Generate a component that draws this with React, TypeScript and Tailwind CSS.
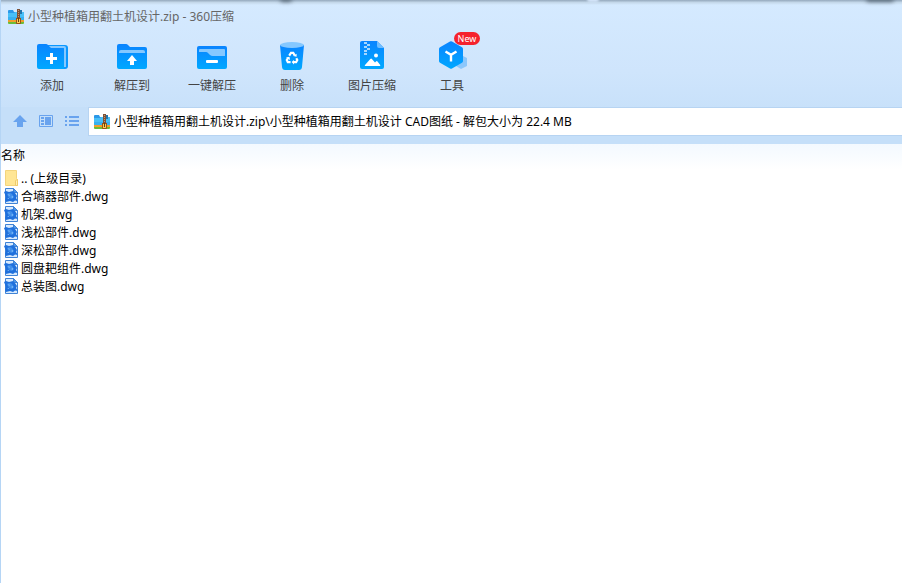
import type { ReactNode } from 'react';

const files = [
  '合墒器部件.dwg',
  '机架.dwg',
  '浅松部件.dwg',
  '深松部件.dwg',
  '圆盘耙组件.dwg',
  '总装图.dwg',
];

function Gradient({ id }: { id: string }) {
  return (
    <defs>
      <linearGradient id={id} x1="0" y1="0" x2="0" y2="1">
        <stop offset="0" stopColor="#0a84ff" />
        <stop offset="1" stopColor="#00a8ff" />
      </linearGradient>
    </defs>
  );
}

function AddIcon() {
  return (
    <svg width="32" height="32" viewBox="0 0 32 32" aria-hidden="true">
      <Gradient id="add" />
      <path d="M12 4h17a3 3 0 0 1 3 3v18a3 3 0 0 1-3 3H12z" fill="#0a98ff" />
      <path d="M13 5h15a2 2 0 0 1 2 2v19h-2V7H13z" fill="#85c8ff" />
      <path d="M1 5a2 2 0 0 1 2-2h7a3 3 0 0 1 2 1l3 3h11a2 2 0 0 1 2 2v19H3a2 2 0 0 1-2-2z" fill="url(#add)" />
      <path d="M14 12h3v4h4v3h-4v4h-3v-4h-4v-3h4z" fill="#fff" />
    </svg>
  );
}

function ExtractIcon() {
  return (
    <svg width="32" height="32" viewBox="0 0 32 32" aria-hidden="true">
      <Gradient id="extract" />
      <path d="M1 5a2 2 0 0 1 2-2h7a3 3 0 0 1 2 1l2 2h15a2 2 0 0 1 2 2v18a2 2 0 0 1-2 2H3a2 2 0 0 1-2-2z" fill="url(#extract)" />
      <path d="M3 12v-1a2 2 0 0 1 2-2h22a2 2 0 0 1 2 2v1z" fill="#85c8ff" />
      <path d="M16 14l5 6h-3v4h-4v-4h-3z" fill="#fff" />
    </svg>
  );
}

function QuickIcon() {
  return (
    <svg width="32" height="32" viewBox="0 0 32 32" aria-hidden="true">
      <Gradient id="quick" />
      <rect x="1" y="5" width="30" height="23" rx="2" fill="url(#quick)" />
      <path d="M3 11V9a1 1 0 0 1 1-1h24a1 1 0 0 1 1 1v6H17a4 4 0 0 1-3-1l-2-2a3 3 0 0 0-2-1z" fill="#85c8ff" />
      <rect x="10" y="19" width="12" height="3" rx="1" fill="#fff" />
    </svg>
  );
}

function DeleteIcon() {
  return (
    <svg width="32" height="32" viewBox="0 0 32 32" aria-hidden="true">
      <Gradient id="trash" />
      <path d="M4 4h24l-2 22q-.3 3-3 3H9q-2.700 0-3-3z" fill="url(#trash)" />
      <ellipse cx="16" cy="4" rx="12" ry="3" fill="#85c8ff" />
      <g fill="none" stroke="#fff" strokeWidth="2.200">
        <path d="M13.200 14.600l1.800-2.800h2.200l1.500 2.600" />
        <path d="M20.300 17.200l1 1.900-1.200 2.100h-2.300" />
        <path d="M14.600 21.200h-2.800L10.800 19l1.200-2" />
      </g>
      <path d="M20.600 12.800v3l-3.300-.7zM18 18.900v4.500l-2.400-2.300zM10 16.500l3.500-.8.500 3.200z" fill="#fff" />
    </svg>
  );
}

function ImageZipIcon() {
  return (
    <svg width="32" height="32" viewBox="0 0 32 32" aria-hidden="true">
      <Gradient id="image" />
      <path d="M4 2a2 2 0 0 1 2-2h15l7 7v19a2 2 0 0 1-2 2H6a2 2 0 0 1-2-2z" fill="url(#image)" />
      <path d="M21 0l7 7h-5a2 2 0 0 1-2-2z" fill="#70bdff" />
      <path d="M8 1h3v2H8zM11 3h3v2h-3zM8 5h3v2H8zM11 7h3v2h-3zM8 9h3v2H8zM8 12h3v2H8z" fill="#a5d7ff" />
      <circle cx="20" cy="14.500" r="2" fill="#fff" />
      <path d="M9 25q-.6-.2 0-1l5.300-6q.8-.8 1.600 0l3.100 3.500 1-1q.8-.8 1.500 0l2.700 3.500q.5.800-.4 1z" fill="#fff" />
    </svg>
  );
}

function ToolsIcon() {
  return (
    <svg width="32" height="32" viewBox="0 0 32 32" aria-hidden="true">
      <Gradient id="tools" />
      <path d="M25 14l6 3v8l-6 3-5-3z" fill="#8cc7fb" />
      <path d="M14 .5q1-.6 2 0l10 5.800q1 .6 1 1.700v12q0 1.100-1 1.700L16 27.500q-1 .6-2 0L4 21.700q-1-.6-1-1.700V8q0-1.100 1-1.700z" fill="url(#tools)" />
      <path d="M9.500 10.500l5.500 3.300 5.500-3.300M15 13.800v6.700" stroke="#fff" strokeWidth="2.400" fill="none" />
    </svg>
  );
}

function ZipIcon() {
  return (
    <svg width="16" height="16" viewBox="0 0 16 16" className="shrink-0" aria-hidden="true">
      <path d="M0 2q0-1 1-1h4l1 2h9q1 0 1 1v8H0z" fill="#2b98e8" />
      <path d="M0 4h6l1-1h8q1 0 1 1v7H0z" fill="#48c0f8" />
      <path d="M0 8h16v3H0z" fill="#38b0f0" />
      <path d="M0 11h16v2H0z" fill="#ef9f2c" />
      <path d="M0 13h16v1q0 1-1 1H1q-1 0-1-1z" fill="#6cbc38" />
      <path d="M9 0h3v9H9z" fill="#7d5238" />
      <path d="M12 1h2v4h-2z" fill="#2274ac" />
      <path d="M10 1h1v1h-1zM10 3h1v1h-1zM10 5h1v1h-1zM10 7h1v1h-1z" fill="#c89468" />
      <path d="M8 9h5v5q0 1-1 1H9q-1 0-1-1z" fill="#9a5216" />
      <path d="M9 10h3v4H9z" fill="#f8ce50" />
      <path d="M10 9h1v4h-1z" fill="#6b3b12" />
    </svg>
  );
}

function FolderIcon() {
  return (
    <svg width="16" height="18" viewBox="0 0 16 18" className="shrink-0" aria-hidden="true">
      <path d="M1.500.500h11v8l1 1v6h-12z" fill="#ffe694" stroke="#f3d47c" />
      <path d="M13.500 9.500v6h-2v-5z" fill="#fff0b5" stroke="#efcb6b" />
    </svg>
  );
}

function DwgIcon() {
  return (
    <svg width="16" height="18" viewBox="0 0 16 18" className="shrink-0" aria-hidden="true">
      <path d="M1.500.500h8l4 4v11h-12z" fill="#d6e9fd" stroke="#3f83d6" />
      <path d="M9.500.500v4h4z" fill="#4f97e6" stroke="#3f83d6" />
      <path d="M0 4l2-1 3 1 4-1 2 2 2 3-1 2 2 3-3-.5-2 1.500-3-1-4 1-1-2 1-3z" fill="#1f70dc" />
      <path d="M3 6q3-2 5 0l2 3-2 2-3-1z" fill="#3f8eea" />
      <path d="M4 6l2 1-1 1zM7 9l2-1v2zM3 11l2-1v1z" fill="#82bef8" />
    </svg>
  );
}

function ToolButton({ label, badge, children }: { label: string; badge?: string; children: ReactNode }) {
  return (
    <button type="button" className="relative flex w-20 flex-col items-center gap-1 text-[#444]">
      {children}
      {badge && (
        <span className="absolute -top-[9px] left-[42px] h-[13px] w-[26px] rounded-full bg-[#f5222d] text-center text-[9px] leading-[13px] text-white">
          {badge}
        </span>
      )}
      <span className="leading-[18px]">{label}</span>
    </button>
  );
}

export default function App() {
  return (
    <div className="min-h-screen border-l border-[#b5d5f5] bg-white font-['Noto_Sans','Noto_Sans_CJK_SC',sans-serif] text-[12px] text-black">
      <header className="relative overflow-hidden bg-linear-to-b from-[#d5eaff] via-[#cfe5fc] to-[#c1ddf8]">
        <div className="h-[5px] bg-linear-to-b from-[#94a8bc] via-[#c4d8ea] to-[#d5eaff]" />
        {/* shadow of the window behind the title bar */}
        <span className="absolute -top-1 left-[31%] h-1.5 w-3 rounded-full bg-[#5f7080] blur-[2px]" />
        <span className="absolute -top-1 left-[65%] h-1.5 w-3 rounded-full bg-[#d5e6fb] blur-[1px]" />
        <span className="absolute -top-1 right-2 h-1.5 w-7 rounded-full bg-[#5f7080] blur-[2px]" />
        <h1 className="flex h-6 items-center gap-1 px-[7px] text-[#666]">
          <ZipIcon />
          小型种植箱用翻土机设计.zip - 360压缩
        </h1>

        <nav className="flex h-[78px] px-[11px] pt-3">
          <ToolButton label="添加"><AddIcon /></ToolButton>
          <ToolButton label="解压到"><ExtractIcon /></ToolButton>
          <ToolButton label="一键解压"><QuickIcon /></ToolButton>
          <ToolButton label="删除"><DeleteIcon /></ToolButton>
          <ToolButton label="图片压缩"><ImageZipIcon /></ToolButton>
          <ToolButton label="工具" badge="New"><ToolsIcon /></ToolButton>
        </nav>

        <div className="flex items-center bg-[#c5dff9] pb-2">
          <div className="flex w-[87px] shrink-0 items-center gap-3 pl-3">
            <button type="button" aria-label="向上">
              <svg width="14" height="14" viewBox="0 0 14 14" fill="#69a3ee">
                <path d="M7 0l7 7h-4v5H4V7H0z" />
              </svg>
            </button>
            <button type="button" aria-label="预览">
              <svg width="14" height="14" viewBox="0 0 14 14" fill="#69a3ee">
                <path d="M.5.500h13v11H.5z" fill="none" stroke="#69a3ee" />
                <path d="M2 2h3v2H2zM2 5h3v2H2zM2 8h3v2H2zM6 2h6v8H6z" />
              </svg>
            </button>
            <button type="button" aria-label="列表">
              <svg width="14" height="14" viewBox="0 0 14 14" fill="#69a3ee">
                <path d="M0 1h2v2H0zM4 1h10v2H4zM0 5h2v2H0zM4 5h10v2H4zM0 9h2v2H0zM4 9h10v2H4z" />
              </svg>
            </button>
          </div>
          <label className="flex h-[29px] flex-1 items-center gap-1 border-y border-l border-[#b7d4f2] bg-white pl-[5px]">
            <ZipIcon />
            <input
              type="text"
              aria-label="路径"
              className="min-w-0 flex-1 outline-none"
              defaultValue="小型种植箱用翻土机设计.zip\小型种植箱用翻土机设计 CAD图纸 - 解包大小为 22.4 MB"
            />
          </label>
        </div>
      </header>

      <table className="w-full text-left">
        <thead>
          <tr className="h-[26px] bg-linear-to-b from-[#f3f9ff] to-white align-top leading-6">
            <th className="p-0 font-normal">名称</th>
          </tr>
        </thead>
        <tbody>
          <tr>
            <td className="p-0">
              <button type="button" className="flex h-[18px] items-center gap-[1px] pl-[3px]">
                <FolderIcon />
                .. (上级目录)
              </button>
            </td>
          </tr>
          {files.map((name) => (
            <tr key={name}>
              <td className="p-0">
                <div className="flex h-[18px] items-center gap-[1px] pl-[3px]">
                  <DwgIcon />
                  {name}
                </div>
              </td>
            </tr>
          ))}
        </tbody>
      </table>
    </div>
  );
}
